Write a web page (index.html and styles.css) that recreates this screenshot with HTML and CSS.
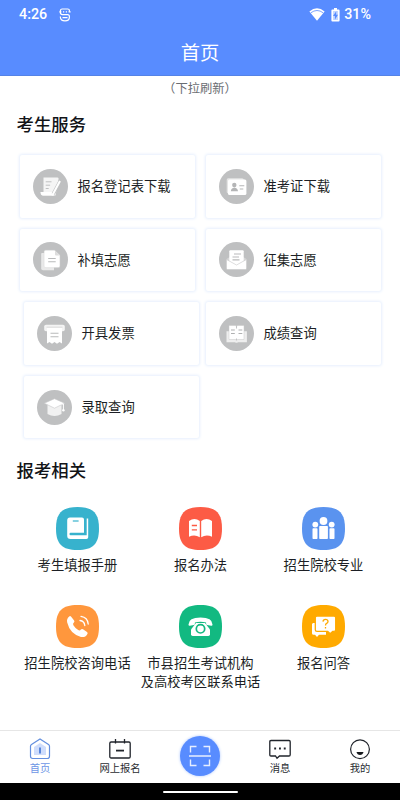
FILE: index.html
```html
<!DOCTYPE html>
<html lang="zh-CN">
<head>
<meta charset="utf-8">
<title>首页</title>
<link rel="stylesheet" href="styles.css">
</head>
<body>
<div class="app">
  <header class="header">
    <div class="status">
      <span class="time">4:26</span>
      <svg class="logo" width="12" height="14" viewBox="0 0 12 14" fill="none" stroke="#fff" stroke-width="1.2"><path d="M10.4 3.8V2.6Q10.4 1 8.8 1H3.2Q1.4 1 1.4 3v1.6q0 2 2 2h5.2q1.8 0 1.8 2v.6q0 3.6-4.4 3.6T1.4 9.2V8.6"/><path d="M.4 3.8h2M9.6 3.8h2M4 3.8h1.2M6.8 3.8H8M3.5 9.6h5"/></svg>
      <svg class="wifi" width="16" height="13" viewBox="0 0 16 13"><path d="M.4 3.4Q8-2.8 15.6 3.4L8 12.8Z" fill="#fff"/><path d="M1.8 4.8Q8 .2 14.2 4.8" fill="none" stroke="#588cff" stroke-width=".8"/></svg>
      <svg class="battery" width="9" height="14" viewBox="0 0 9 14"><path d="M3 0h3v1.4h1.6q1 0 1 1v10q0 1-1 1H1.4q-1 0-1-1v-10q0-1 1-1H3Z" fill="#fff"/><path d="M2 3h5v9H2Z" fill="#588cff" opacity=".35"/><path d="M5.2 3.2L2 8h1.9v3.7L7 6.8H5.2Z" fill="#588cff"/></svg>
      <span class="percent">31%</span>
    </div>
    <h1 class="title">首页</h1>
  </header>

  <main class="content">
    <p class="hint">（下拉刷新）</p>
    <h2 class="heading">考生服务</h2>
    <div class="services">
      <div class="card">
        <svg class="disc" viewBox="0 0 35 35"><circle cx="17.5" cy="17.5" r="17.5" fill="#bfc0c1"/><path d="M10.5 8.5h14q1.5 0 1 2l-3 16H10q-2.5 0-2.5-3.5h3Z" fill="#f5f5f5"/><path d="M7.7 23h11.5l1.3 3.5H10Q8 26.5 7.7 23Z" fill="#fff"/><path d="M12.7 12.8h5.8M12.7 16.2h4.4M12.7 19.5h3" stroke="#bfc0c1"/><path d="M27.2 12L20.2 25" stroke="#bfc0c1" stroke-width="3.5"/><path d="M27 12L20.2 24.7l-.8 2" stroke="#fff" stroke-width="2"/></svg>
        <span>报名登记表下载</span>
      </div>
      <div class="card">
        <svg class="disc" viewBox="0 0 35 35"><circle cx="17.5" cy="17.5" r="17.5" fill="#bfc0c1"/><rect x="7.7" y="9.3" width="17" height="15" rx="1.5" fill="#e5e5e5"/><rect x="9" y="10.5" width="18.4" height="15.5" rx="1.5" fill="#fff"/><circle cx="15.3" cy="16" r="2.2" fill="#b4b5b6"/><path d="M11.8 22.3q.3-3.3 3.6-3.8 3.3.5 3.6 3.8ZM20.3 16.2h5v1h-5ZM20.8 19.5h3.5v1h-3.5Z" fill="#b4b5b6"/></svg>
        <span>准考证下载</span>
      </div>
      <div class="card">
        <svg class="disc" viewBox="0 0 35 35"><circle cx="17.5" cy="17.5" r="17.5" fill="#bfc0c1"/><path d="M9 11h12v17.2H10q-1.8 0-1.8-1.8V12q0-1 .8-1Z" fill="#e9e9e9"/><path d="M12.5 8.2h9l5.4 5v10.7q0 1.7-1.7 1.7H12.6q-1.5 0-1.5-1.5V9.8q0-1.6 1.4-1.6Z" fill="#fff" stroke="#d4d4d4" stroke-width=".4"/><path d="M22 8.6v3.8q0 1 1 1h3.7" fill="#ddd"/><path d="M15.2 16.5h7.5M15.2 19.8h7.5" stroke="#b9babb" stroke-width="1.1"/></svg>
        <span>补填志愿</span>
      </div>
      <div class="card">
        <svg class="disc" viewBox="0 0 35 35"><circle cx="17.5" cy="17.5" r="17.5" fill="#bfc0c1"/><path d="M7.5 17l10-6 10 6v9H7.5Z" fill="#d7d7d8"/><rect x="10.3" y="8.2" width="14.4" height="15" rx="1" fill="#fff"/><path d="M15 12h7M13.5 15h6.5M13.5 17.9h7" stroke="#b9babb" stroke-width="1.1"/><path d="M7.5 17.5l10 5.5 10-5.5v9q0 1-1 1h-18q-1 0-1-1Z" fill="#fff" stroke="#c6c6c7" stroke-width=".6"/></svg>
        <span>征集志愿</span>
      </div>
      <div class="card nudged">
        <svg class="disc" viewBox="0 0 35 35"><circle cx="17.5" cy="17.5" r="17.5" fill="#bfc0c1"/><rect x="7.2" y="8.8" width="20.6" height="6.5" rx="1.8" fill="#f4f4f4"/><path d="M10 11.5h15v16l-2.5-1.4-2.5 1.7-2.5-1.7-2.5 1.7-2.5-1.7-2.5 1.4Z" fill="#fff"/><path d="M9.5 11.2h16" stroke="#d2d2d2" stroke-width=".8"/><path d="M13.5 17.2h8M13.5 20.8h8" stroke="#b9babb" stroke-width="1.1"/></svg>
        <span>开具发票</span>
      </div>
      <div class="card">
        <svg class="disc" viewBox="0 0 35 35"><circle cx="17.5" cy="17.5" r="17.5" fill="#bfc0c1"/><path d="M7.5 15.3h20.4v11H19q-1.5 1-3 0H7.5Z" fill="#eee"/><path d="M10 9.5h6q1.5 0 1.5 1.2 0-1.2 1.5-1.2h6v14h-6q-1.5 0-1.5 1.2 0-1.2-1.5-1.2h-6Z" fill="#fff" stroke="#c8c8c8" stroke-width=".5"/><path d="M17.5 10v2.5M17.5 22.5v1.5" stroke="#c3c4c5"/><path d="M12 14h3.8M12 17.5h3.8M19.5 14h3.8M19.5 17.5h3.8" stroke="#b0b1b2" stroke-width="1"/></svg>
        <span>成绩查询</span>
      </div>
      <div class="card nudged">
        <svg class="disc" viewBox="0 0 35 35"><circle cx="17.5" cy="17.5" r="17.5" fill="#bfc0c1"/><path d="M10.5 15h14v9q-7 3.8-14 0Z" fill="#f1f1f1"/><path d="M17.5 8.7l10.2 4.5-10.2 5-10.2-5Z" fill="#fff" stroke="#c6c6c7" stroke-width=".6"/><path d="M19 13.5l7.4.5v6" fill="none" stroke="#fff"/><circle cx="26.4" cy="20.2" r="1.2" fill="#fff"/></svg>
        <span>录取查询</span>
      </div>
    </div>

    <h2 class="heading related-heading">报考相关</h2>
    <div class="related">
      <div class="entry">
        <svg class="tile teal" viewBox="0 0 43 43"><path class="shape" d="M21.5 0C37 0 43 6 43 21.5S37 43 21.5 43 0 37 0 21.5 6 0 21.5 0Z"/><path d="M14 10.5h12q2 0 2 2v13.2H14.5q-1 0-1 1.3t1 1.3h16.2V11.5h1.5v18.7q0 1.8-1.8 1.8H14.5q-3.3 0-3.3-3.3V13.5q0-3 2.8-3Z" fill="#fff"/><path d="M16.8 14h5.8" stroke="#37b2cd" stroke-width="1.2"/></svg>
        <span>考生填报手册</span>
      </div>
      <div class="entry">
        <svg class="tile red" viewBox="0 0 43 43"><path class="shape" d="M21.5 0C37 0 43 6 43 21.5S37 43 21.5 43 0 37 0 21.5 6 0 21.5 0Z"/><path d="M10 14q5.5-4 10.8 0v16.3q-5-3.5-10.8-.6ZM22.2 14q5.3-4 10.8 0v15.7q-5.8-2.9-10.8.6Z" fill="#fff"/><path d="M12.8 18.5h5.2M12.8 22.8h5.2" stroke="#fc5b45" stroke-width="1.3"/></svg>
        <span>报名办法</span>
      </div>
      <div class="entry">
        <svg class="tile blue" viewBox="0 0 43 43"><path class="shape" d="M21.5 0C37 0 43 6 43 21.5S37 43 21.5 43 0 37 0 21.5 6 0 21.5 0Z"/><g fill="#fff"><circle cx="21.5" cy="14" r="3.9"/><circle cx="13.3" cy="17.6" r="2.9"/><circle cx="29.7" cy="17.6" r="2.9"/><rect x="17.2" y="19" width="8.7" height="13" rx=".8"/><rect x="10.5" y="21.3" width="5" height="10.7" rx=".7"/><rect x="27.5" y="21.3" width="5" height="10.7" rx=".7"/></g></svg>
        <span>招生院校专业</span>
      </div>
      <div class="entry">
        <svg class="tile orange" viewBox="0 0 43 43"><path class="shape" d="M21.5 0C37 0 43 6 43 21.5S37 43 21.5 43 0 37 0 21.5 6 0 21.5 0Z"/><path d="M13.2 11.4q1-.8 2 .3l2.9 3.7q.8 1.1-.2 2.1-1.5 1.2-.5 2.8 1.8 3 4.8 4.8 1.6 1 2.7-.5.9-1.1 2.1-.3l4 2.6q1.1.8.4 2-2.3 4-6.4 3Q14 29 11.2 17.5q-.9-3.8 2-6.1Z" fill="#fff"/><path d="M24 15.5q4.3.5 4.8 5M25 11.4q6.6 1 7.2 7.6" fill="none" stroke="#fff" stroke-width="1.3" stroke-linecap="round"/></svg>
        <span>招生院校咨询电话</span>
      </div>
      <div class="entry">
        <svg class="tile green" viewBox="0 0 43 43"><path class="shape" d="M21.5 0C37 0 43 6 43 21.5S37 43 21.5 43 0 37 0 21.5 6 0 21.5 0Z"/><path d="M9.5 19.5q0-7 12-7t12 7q0 1.4-1.3 1.2l-4.1-.6q-1-.2-1-1.3v-1.3q-5.6-1.7-11.2 0v1.3q0 1.1-1 1.3l-4.1.6q-1.3.2-1.3-1.2Z" fill="#fff"/><path d="M17 18h9l5 6.5v4.8q0 1.7-1.7 1.7H13.7Q12 31 12 29.3v-4.8Z" fill="#fff"/><circle cx="21.5" cy="23.8" r="4.2" fill="#fff" stroke="#12b981" stroke-width="1.7"/></svg>
        <span>市县招生考试机构<br>及高校考区联系电话</span>
      </div>
      <div class="entry">
        <svg class="tile amber" viewBox="0 0 43 43"><path class="shape" d="M21.5 0C37 0 43 6 43 21.5S37 43 21.5 43 0 37 0 21.5 6 0 21.5 0Z"/><path d="M11 18h13v11.8h-7l-2 2.3-2-2.3h-1.3q-1.7 0-1.7-1.6V19Z" fill="#fff"/><path d="M15 11h17q1.7 0 1.7 1.7v12q0 1.7-1.7 1.7h-1.3l-2.5 2.4-2.5-2.4H15q-1.7 0-1.7-1.7v-12Q13.3 11 15 11Z" fill="#fff" stroke="#ffaa00" stroke-width="1.3"/><path d="M21 16.6q.2-2.2 2.5-2.2t2.5 2q0 1.3-1.4 2-1.1.6-1.1 2M23.5 22v1.6" fill="none" stroke="#ffaa00" stroke-width="1.3"/></svg>
        <span>报名问答</span>
      </div>
    </div>
  </main>

  <nav class="tabs">
    <div class="tab active">
      <svg width="22" height="22" viewBox="0 0 22 22" fill="none"><path d="M5 9l6-4 6 4v8H5Z" fill="#cfddfc"/><path d="M2.5 6.5L11 1l8.5 5.5q1 .7 1 1.8v10q0 2.2-2.2 2.2H3.7q-2.2 0-2.2-2.2v-10q0-1.1 1-1.8Z" stroke="#648fdf" stroke-width="1.2"/><path d="M11 9.5v6" stroke="#4c7dd9" stroke-width="1.8"/></svg>
      <span>首页</span>
    </div>
    <div class="tab">
      <svg width="22" height="22" viewBox="0 0 22 22" fill="none" stroke="#20242b" stroke-width="1.3"><rect x=".8" y="4" width="20.4" height="16" rx="1.3"/><path d="M6.5 1v4.6M15.5 1v4.6"/><path d="M7 12.6h8" stroke-width="1.8"/></svg>
      <span>网上报名</span>
    </div>
    <div class="tab">
      <div class="scan"><svg width="22" height="22" viewBox="0 0 22 22" fill="none" stroke="#e6eeff" stroke-width="1.4"><path d="M1.5 7.5v-6h6M14.5 1.5h6v6M1.5 14.5v6h6M14.5 20.5h6v-6M0 11h22"/></svg></div>
    </div>
    <div class="tab">
      <svg width="22" height="22" viewBox="0 0 22 22" fill="none" stroke="#20242b" stroke-width="1.3"><path d="M2 2.5h18q1.2 0 1.2 1.2v13.1q0 1.2-1.2 1.2h-9.5L8 20.3 6.5 18H2Q.8 18 .8 16.8V3.7Q.8 2.5 2 2.5Z"/><path d="M5.2 10.5h1.9M10 10.5h1.9M14.8 10.5h1.9" stroke-width="1.9"/></svg>
      <span>消息</span>
    </div>
    <div class="tab">
      <svg width="22" height="22" viewBox="0 0 22 22"><circle cx="11" cy="11.2" r="9.4" fill="none" stroke="#20242b" stroke-width="1.2"/><path d="M7.5 14h7q-.7 3-3.5 3t-3.5-3Z" fill="#15181c"/></svg>
      <span>我的</span>
    </div>
  </nav>
  <div class="system-bar"><span class="handle"></span></div>
</div>
</body>
</html>
```
FILE: styles.css
```css
* { box-sizing: border-box; }
body {
  margin: 0;
  background: #fff;
  color: #1c1f25;
  font-family: "Noto Sans CJK SC", sans-serif;
}
svg { display: block; flex: none; }
.app {
  width: 400px;
  height: 800px;
  display: flex;
  flex-direction: column;
  overflow: hidden;
}
.header {
  flex: none;
  height: 76px;
  background: #588cff;
  border-bottom: 1px solid #5583e6;
  color: #fff;
}
.status {
  display: flex;
  align-items: center;
  height: 29px;
  padding: 0 29px 0 19px;
  font: 500 14.3px/29px Roboto, sans-serif;
}
.time { width: 40px; }
.wifi { margin-left: auto; margin-right: 6px; }
.battery { margin-right: 4px; }
.title {
  margin: 9px 0 0;
  font-size: 19.3px;
  font-weight: 400;
  line-height: 28px;
  text-align: center;
}
.content { flex: none; height: 611.5px; overflow: hidden; }
.hint {
  margin: 2px 0 0;
  color: #6a6d72;
  font-size: 12.3px;
  line-height: 20px;
  text-align: center;
}
.heading {
  margin: 14px 0 0 16.5px;
  color: #121418;
  font-size: 17.4px;
  font-weight: 500;
  line-height: 24px;
}
.services {
  display: grid;
  grid-template-columns: 175px 175px;
  grid-auto-rows: 62.6px;
  gap: 11px 11px;
  margin: 19px 0 0 20px;
}
.card {
  display: flex;
  align-items: center;
  gap: 10px;
  padding-left: 12.5px;
  border-radius: 2px;
  background: #fff;
  box-shadow: 0 0 3px 1px #e7effd;
  font-size: 13.3px;
}
.card span { margin-top: -1px; }
.nudged { margin: 0 -4px 0 4px; }
.disc { width: 35px; height: 35px; }
.related-heading { margin-top: 20px; }
.related {
  display: grid;
  grid-template-columns: repeat(3, 123px);
  grid-auto-rows: 98px;
  margin: 25px 0 0 16px;
}
.entry {
  display: flex;
  flex-direction: column;
  align-items: center;
  font-size: 13.3px;
  line-height: 19px;
  text-align: center;
  white-space: nowrap;
}
.tile { width: 43px; height: 43px; margin-bottom: 5px; }
.teal .shape { fill: #37b2cd; }
.red .shape { fill: #fc5b45; }
.blue .shape { fill: #5a93ef; }
.orange .shape { fill: #ff973d; }
.green .shape { fill: #12b981; }
.amber .shape { fill: #ffaa00; }
.tabs {
  display: grid;
  grid-template-columns: repeat(5, 1fr);
  flex: none;
  height: 53px;
  margin-top: auto;
  border-top: 1px solid #e6e6e6;
}
.tab {
  display: flex;
  flex-direction: column;
  align-items: center;
  padding-top: 7px;
  color: #292c31;
  font-size: 10.3px;
  line-height: 16px;
}
.active { color: #6d96e5; }
.scan {
  display: grid;
  place-items: center;
  width: 40px;
  height: 40px;
  margin-top: -2px;
  border-radius: 50%;
  background: #588cff;
  box-shadow: 0 0 3px #a9c4ff;
}
.system-bar {
  flex: none;
  display: flex;
  justify-content: center;
  height: 17px;
  padding-top: 8px;
  background: #000;
}
.handle {
  width: 75px;
  height: 2px;
  border-radius: 1px;
  background: #fff;
}
```
